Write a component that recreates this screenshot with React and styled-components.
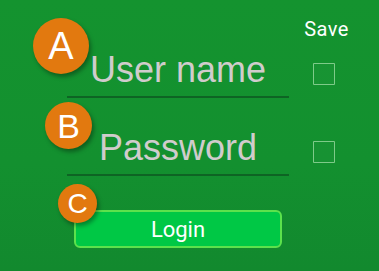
import React from 'react';
import styled, { createGlobalStyle } from 'styled-components';

const GlobalStyle = createGlobalStyle`
  html, body {
    margin: 0;
    padding: 0;
    background: #13902f;
  }
  body {
    font-family: 'Liberation Sans', Arial, sans-serif;
  }
`;

const App = () => {
  return (
    <Screen>
      <GlobalStyle />
      <Form>
        <Row $mt={18}>
          <span />
          <SaveLabel>Save</SaveLabel>
        </Row>
        <Row $mt={10}>
          <Field placeholder="User name" />
          <Check type="checkbox" aria-label="Save user name" />
        </Row>
        <Row $mt={30}>
          <Field type="password" placeholder="Password" />
          <Check type="checkbox" aria-label="Save password" />
        </Row>
        <Row $mt={34}>
          <LoginButton>Login</LoginButton>
        </Row>
      </Form>

      <Badge $size={56} $top={18} $left={33} $font={38}>A</Badge>
      <Badge $size={47} $top={102} $left={45} $font={34}>B</Badge>
      <Badge $size={39} $top={184} $left={58} $font={28}>C</Badge>
    </Screen>
  );
};

export default App;

const Screen = styled.div`
  position: relative;
  width: 379px;
  height: 271px;
  overflow: hidden;
  background: linear-gradient(180deg, #14932f 0%, #13902f 60%, #12892e 100%);
`;

const Form = styled.form`
  display: flex;
  flex-direction: column;
  padding-left: 67px;
`;

const Row = styled.div`
  display: grid;
  grid-template-columns: 222px 72px;
  align-items: center;
  margin-top: ${(p) => p.$mt}px;
`;

const SaveLabel = styled.span`
  font-family: Roboto, 'Liberation Sans', sans-serif;
  font-size: 20px;
  line-height: 22px;
  color: #ffffff;
  text-align: center;
  letter-spacing: 0.4px;
  padding-left: 3px;
`;

const Field = styled.input`
  box-sizing: content-box;
  width: 222px;
  height: 40px;
  margin: 0;
  padding: 0 0 6px;
  border: none;
  border-bottom: 2px solid #0e6424;
  background: transparent;
  outline: none;
  font-family: 'Liberation Sans', Arial, sans-serif;
  font-size: 36px;
  color: #d0cccc;
  text-align: center;

  &::placeholder {
    color: #d0cccc;
    opacity: 1;
  }
`;

const Check = styled.input`
  appearance: none;
  justify-self: center;
  box-sizing: border-box;
  width: 22px;
  height: 22px;
  margin: 0 0 0 -2px;
  border: 1.5px solid rgba(195, 240, 195, 0.6);
  background: rgba(255, 255, 255, 0.02);
  border-radius: 1px;
`;

const LoginButton = styled.button`
  box-sizing: border-box;
  width: 208px;
  height: 38px;
  margin-left: 7px;
  border: 2px solid #5ce24c;
  border-radius: 6px;
  background: #00c845;
  color: #ffffff;
  font-family: Roboto, 'Liberation Sans', sans-serif;
  font-size: 22px;
  cursor: pointer;
`;

const Badge = styled.div`
  position: absolute;
  top: ${(p) => p.$top}px;
  left: ${(p) => p.$left}px;
  width: ${(p) => p.$size}px;
  height: ${(p) => p.$size}px;
  border-radius: 50%;
  background: #e2790f;
  box-shadow: 2px 3px 4px rgba(0, 0, 0, 0.35);
  display: flex;
  align-items: center;
  justify-content: center;
  color: #ffffff;
  font-family: 'Liberation Sans', Arial, sans-serif;
  font-size: ${(p) => p.$font}px;
  line-height: 1;
`;
